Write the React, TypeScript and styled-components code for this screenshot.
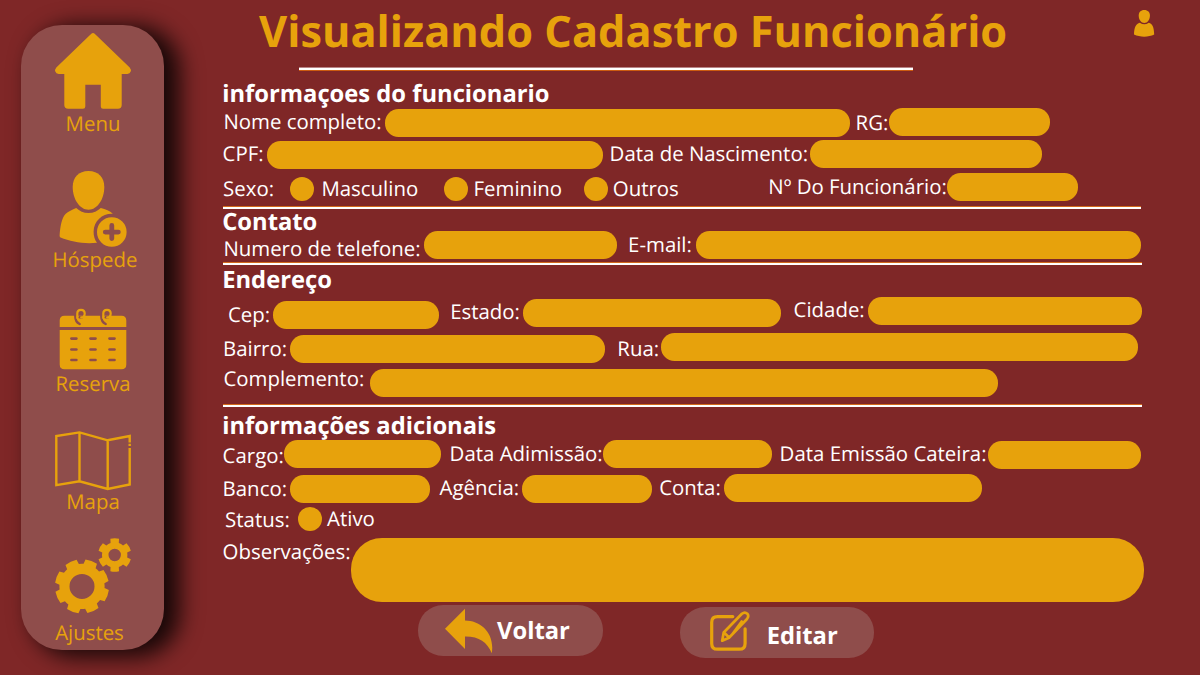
import React from 'react';
import styled, { createGlobalStyle } from 'styled-components';

const GOLD = '#e7a20c';
const PANEL = '#8f4d4b';
const WINE = '#7f2727';

const GlobalStyle = createGlobalStyle`
  * { box-sizing: border-box; }
  body {
    margin: 0;
    background: ${WINE};
    font-family: 'Open Sans', 'Noto Sans', sans-serif;
    text-rendering: geometricPrecision;
    overflow: hidden;
  }
`;

const Page = styled.div`
  display: flex;
  align-items: flex-start;
  width: 1200px;
  height: 675px;
  background: ${WINE};
`;

const Sidebar = styled.nav`
  flex: none;
  display: flex;
  flex-direction: column;
  width: 143px;
  height: 625px;
  margin: 25px 0 0 21px;
  padding-top: 8px;
  border-radius: 41px;
  background: ${PANEL};
  box-shadow: 13px 4px 22px 3px rgba(0, 0, 0, 0.82);
`;

const NavItem = styled.a<{ $h: number; $gap?: number }>`
  flex: none;
  display: flex;
  flex-direction: column;
  align-items: center;
  justify-content: space-between;
  height: ${(p) => p.$h}px;
  margin-top: ${(p) => p.$gap ?? 0}px;
  color: ${GOLD};
  svg {
    display: block;
    flex: none;
    overflow: visible;
  }
`;

const NavText = styled.span<{ $shift?: number }>`
  font-size: 20.4px;
  line-height: 24px;
  margin-left: ${(p) => p.$shift ?? 0}px;
  white-space: nowrap;
`;

const Main = styled.main`
  flex: 1;
  display: flex;
  flex-direction: column;
  padding-left: 57px;
`;

const Header = styled.header`
  display: flex;
  height: 67px;
`;

const Title = styled.h1`
  margin: 1px 0 0 38px;
  width: 875px;
  flex: none;
  font-size: 43.33px;
  line-height: 60px;
  font-weight: 700;
  color: ${GOLD};
  white-space: nowrap;
`;

const UserButton = styled.span`
  display: block;
  height: 27px;
  margin-top: 10px;
  svg {
    display: block;
  }
`;

const TitleRule = styled.div`
  width: 614px;
  height: 4px;
  margin: 0 0 10px 78px;
  background: linear-gradient(#b98486 0 1px, #fff 1px 3px, #cc5c10 3px 4px);
`;

const Rule = styled.hr<{ $w?: number }>`
  flex: none;
  width: ${(p) => p.$w ?? 919}px;
  height: 3px;
  margin: 0 0 0 2px;
  border: 0;
  background: linear-gradient(#d2691b 0 1px, #fff 1px 3px);
`;

const Heading = styled.h2<{ $h: number; $top?: number }>`
  flex: none;
  margin: ${(p) => p.$top ?? 0}px 0 0 1.2px;
  height: ${(p) => p.$h}px;
  font-size: 23.75px;
  line-height: 24px;
  font-weight: 700;
  color: #fff;
  white-space: nowrap;
`;

const Row = styled.div<{ $h: number }>`
  flex: none;
  display: flex;
  align-items: flex-start;
  height: ${(p) => p.$h}px;
`;

const Label = styled.label<{ $w: number; $top?: number; $gap?: number }>`
  flex: none;
  width: ${(p) => p.$w}px;
  margin: ${(p) => p.$top ?? 0}px 0 0 ${(p) => p.$gap ?? 0}px;
  padding-left: 1.6px;
  font-size: 20.42px;
  line-height: 28px;
  color: #fff;
  white-space: nowrap;
`;

const Field = styled.div<{ $w: number; $top?: number; $h?: number }>`
  flex: none;
  width: ${(p) => p.$w}px;
  height: ${(p) => p.$h ?? 28}px;
  margin-top: ${(p) => p.$top ?? 0}px;
  border-radius: ${(p) => (p.$h ? 31 : 13.5)}px;
  background: ${GOLD};
`;

const Radio = styled.span<{ $top: number }>`
  flex: none;
  width: 24px;
  height: 24px;
  margin-top: ${(p) => p.$top}px;
  border-radius: 50%;
  background: ${GOLD};
`;

const Actions = styled.div`
  display: flex;
  align-items: flex-start;
  padding-left: 197px;
`;

const ActionButton = styled.button<{ $w: number; $top: number; $gap?: number; $pad: string }>`
  display: flex;
  align-items: flex-start;
  width: ${(p) => p.$w}px;
  height: 51px;
  margin: ${(p) => p.$top}px 0 0 ${(p) => p.$gap ?? 0}px;
  padding: ${(p) => p.$pad};
  border: 0;
  border-radius: 25px;
  background: ${PANEL};
  color: #fff;
  font: 700 23.75px/24px 'Open Sans', 'Noto Sans', sans-serif;
  text-rendering: geometricPrecision;
  svg {
    display: block;
    flex: none;
  }
`;

const ActionText = styled.span<{ $gap: number; $top: number }>`
  margin: ${(p) => p.$top}px 0 0 ${(p) => p.$gap}px;
`;

function gearPath(
  cx: number, cy: number, outer: number, root: number, hole: number,
  teeth: number, start: number, tipHalf: number, rootHalf: number,
) {
  const pt = (r: number, deg: number) => {
    const a = (deg * Math.PI) / 180;
    return `${(cx + r * Math.cos(a)).toFixed(2)} ${(cy + r * Math.sin(a)).toFixed(2)}`;
  };
  const step = 360 / teeth;
  let d = '';
  for (let i = 0; i < teeth; i++) {
    const a = start + i * step;
    d += `${i ? 'L' : 'M'}${pt(root, a - rootHalf)}L${pt(outer, a - tipHalf)}`;
    d += `A${outer} ${outer} 0 0 1 ${pt(outer, a + tipHalf)}L${pt(root, a + rootHalf)}`;
    d += `A${root} ${root} 0 0 1 ${pt(root, a + step - rootHalf)}`;
  }
  return `${d}ZM${cx - hole} ${cy}a${hole} ${hole} 0 1 0 ${2 * hole} 0a${hole} ${hole} 0 1 0 ${-2 * hole} 0Z`;
}

const HomeIcon = () => (
  <svg width="77" height="76" viewBox="54 33 77 76" fill={GOLD}>
    <path d="M91.3 33.7Q93 32.3 94.7 33.7L129.7 67.5Q131.3 69.5 130.7 71.5Q130 73.9 127.3 73.9H121.7V105Q121.7 108.7 118 108.7H103Q100.8 108.7 100.8 106.5V84.8H85.3V106.5Q85.3 108.7 83 108.7H68.2Q64.3 108.7 64.3 105V73.9H58.7Q56 73.9 55.3 71.5Q54.7 69.5 56.3 67.5Z" />
  </svg>
);

const GuestIcon = () => (
  <svg width="69" height="77" viewBox="58 170 69 77" fill={GOLD}>
    <path d="M88.5 171C98.5 171 104.3 177.5 104.3 187C104.3 199 97.5 209.7 88.5 209.7C79.5 209.7 72.7 199 72.7 187C72.7 177.5 78.5 171 88.5 171Z" />
    <path d="M76.2 208C79.5 211 83.5 213 88.5 213C93.5 213 97.5 211 100.8 208C105.5 209.5 110 210.8 112.8 213.7C103 213 93.8 220.5 93.6 231.5C93.5 236 94.8 240 97 242.7C84 244.2 71 241.7 60.5 237.6Q59.5 237 59.6 235.5C60.2 227.5 61.5 218 65.5 214C68 211.5 72.5 209.5 76.2 208Z" />
    <path fillRule="evenodd" d="M111.8 217.2a14.8 14.8 0 1 1 0 29.6a14.8 14.8 0 1 1 0-29.6ZM109.4 225.5V229.7H105.2a2.35 2.35 0 0 0 0 4.7H109.4V238.6a2.4 2.4 0 0 0 4.8 0V234.4H118.4a2.35 2.35 0 0 0 0-4.7H114.2V225.5a2.4 2.4 0 0 0-4.8 0Z" />
  </svg>
);

const CalendarIcon = () => (
  <svg width="69" height="61" viewBox="58 308 69 61" fill="none">
    <path fill={GOLD} d="M64.5 315.7H121.5Q126.3 315.7 126.3 320.5V327H59.7V320.5Q59.7 315.7 64.5 315.7ZM59.7 329.9H126.3V364.5Q126.3 369.3 121.5 369.3H64.5Q59.7 369.3 59.7 364.5Z" />
    {[0, 26].map((x) => (
      <g key={x} transform={`translate(${x} 0)`} strokeLinecap="round">
        <path stroke={PANEL} strokeWidth="2.4" d="M75.3 315V316.5C75.3 320 76.5 322.5 79.7 324" />
        <path stroke={PANEL} strokeWidth="2.4" d="M79.5 317.3H82" />
        <path stroke={GOLD} strokeWidth="2.2" d="M77.3 318V313.5C77.3 308.7 84.7 308.7 84.7 313.5C84.7 316 83.4 317.6 81.2 317.4" />
      </g>
    ))}
    {[338.6, 349.5, 360].map((y) =>
      [71.4, 90.5, 109.5].map((x) => (
        <path key={`${x}-${y}`} stroke={PANEL} strokeWidth="2.6" strokeLinecap="round" d={`M${x} ${y}h5`} />
      )),
    )}
  </svg>
);

const MapIcon = () => (
  <svg width="77" height="59" viewBox="54 430 77 59" fill="none" stroke={GOLD} strokeWidth="2.4">
    <path d="M129.7 442.5V436L107.7 440.3L79.5 432.4L56.3 436V485.2L79.5 481.3L107.7 488.9L129.7 484.5V448M79.5 432.4V481.3M107.7 440.3V488.9M129.7 443.8v2.2" />
  </svg>
);

const GearsIcon = () => (
  <svg width="77" height="77" viewBox="54 537 77 77" fill={GOLD} fillRule="evenodd">
    <path d={gearPath(82, 586.4, 27.1, 22.6, 12.5, 8, 20.5, 13, 16.5)} />
    <path d={gearPath(114.7, 555, 16.7, 12.7, 6.2, 6, 30, 15, 19)} />
  </svg>
);

const UserIcon = () => (
  <svg width="21" height="27" viewBox="1134 10 21 27" fill={GOLD}>
    <path d="M1144.3 10C1147.9 10 1149.9 12.3 1149.9 15.5C1149.9 19.8 1147.5 23 1144.3 23C1141.1 23 1138.7 19.8 1138.7 15.5C1138.7 12.3 1140.7 10 1144.3 10Z" />
    <path d="M1139.8 22.7Q1144.3 26 1148.8 22.7C1152.5 23.7 1154 27 1154.2 34.6C1148.5 37.3 1140 37.3 1134 34.6C1134.2 27 1136 23.7 1139.8 22.7Z" />
  </svg>
);

const BackIcon = () => (
  <svg width="48" height="46" viewBox="445 608 48 46" fill={GOLD}>
    <path d="M445 628.7L465 608.7V620.4C481 620.5 495 633 491.8 653.2C487 642 479 636.3 465 636.5V649Z" />
  </svg>
);

const EditIcon = () => (
  <svg width="40" height="41" viewBox="710 611 40 41" fill="none" stroke={GOLD} strokeWidth="3.2" strokeLinecap="round" strokeLinejoin="round">
    <path d="M732.8 616.6H717.5Q711.7 616.6 711.7 622.4V643.4Q711.7 649.2 717.5 649.2H739.3Q745.1 649.2 745.1 643.4V628.8" />
    <path strokeWidth="2.7" d="M723.7 632.5L741.9 613.8Q744.8 611.4 747.3 613.7Q749.3 616.2 747 619L729 637.8L722.2 640.7ZM724.3 632.8L729 637.5M732.5 634L741.7 621.5" />
  </svg>
);

export default function App() {
  return (
    <>
      <GlobalStyle />
      <Page>
        <Sidebar>
          <NavItem $h={102}>
            <HomeIcon />
            <NavText $shift={1}>Menu</NavText>
          </NavItem>
          <NavItem $h={101} $gap={35}>
            <GuestIcon />
            <NavText $shift={5}>Hóspede</NavText>
          </NavItem>
          <NavItem $h={87} $gap={37}>
            <CalendarIcon />
            <NavText $shift={1}>Reserva</NavText>
          </NavItem>
          <NavItem $h={83} $gap={35}>
            <MapIcon />
            <NavText $shift={1}>Mapa</NavText>
          </NavItem>
          <NavItem $h={107} $gap={24}>
            <GearsIcon />
            <NavText $shift={-6}>Ajustes</NavText>
          </NavItem>
        </Sidebar>

        <Main>
          <Header>
            <Title>Visualizando Cadastro Funcionário</Title>
            <UserButton>
              <UserIcon />
            </UserButton>
          </Header>
          <TitleRule />

          <Heading $h={26}>informaçoes do funcionario</Heading>
          <Row $h={32}>
            <Label $w={163.2} $gap={0.8}>Nome completo:</Label>
            <Field $w={465} $top={2} />
            <Label $w={35} $gap={4} $top={1}>RG:</Label>
            <Field $w={161} $top={1} />
          </Row>
          <Row $h={32}>
            <Label $w={46}>CPF:</Label>
            <Field $w={336} $top={2} />
            <Label $w={202} $gap={5}>Data de Nascimento:</Label>
            <Field $w={232} $top={1} />
          </Row>
          <Row $h={35}>
            <Label $w={68.5} $gap={0.5} $top={3}>Sexo:</Label>
            <Radio $top={6} />
            <Label $w={124.2} $gap={5.8} $top={3}>Masculino</Label>
            <Radio $top={6} />
            <Label $w={112} $gap={4} $top={3}>Feminino</Label>
            <Radio $top={6} />
            <Label $w={154.8} $gap={3.2} $top={3}>Outros</Label>
            <Label $w={180.2} $gap={0.8} $top={1}>Nº Do Funcionário:</Label>
            <Field $w={131} $top={2} />
          </Row>
          <Rule $w={918} />

          <Heading $h={21}>Contato</Heading>
          <Row $h={32}>
            <Label $w={202.2} $gap={0.8} $top={4}>Numero de telefone:</Label>
            <Field $w={193} $top={1} />
            <Label $w={69.5} $gap={9.5}>E-mail:</Label>
            <Field $w={445} $top={1} />
          </Row>
          <Rule />

          <Heading $h={28} $top={2}>Endereço</Heading>
          <Row $h={38}>
            <Label $w={46.6} $gap={5.4} $top={5}>Cep:</Label>
            <Field $w={166} $top={6} />
            <Label $w={74.4} $gap={9.6} $top={2}>Estado:</Label>
            <Field $w={258} $top={4} />
            <Label $w={76} $gap={11}>Cidade:</Label>
            <Field $w={274} $top={2} />
          </Row>
          <Row $h={31}>
            <Label $w={68.5} $gap={0.5} $top={1}>Bairro:</Label>
            <Field $w={315} $top={2} />
            <Label $w={45.3} $gap={10.7} $top={1}>Rua:</Label>
            <Field $w={477} />
          </Row>
          <Row $h={40}>
            <Label $w={148.2} $gap={0.8}>Complemento:</Label>
            <Field $w={628} $top={5} />
          </Row>
          <Rule />

          <Heading $h={26} $top={6}>informações adicionais</Heading>
          <Row $h={34}>
            <Label $w={63} $top={2}>Cargo:</Label>
            <Field $w={157} $top={1} />
            <Label $w={155} $gap={7}>Data Adimissão:</Label>
            <Field $w={169} $top={1} />
            <Label $w={210} $gap={6}>Data Emissão Cateira:</Label>
            <Field $w={153} $top={2} />
          </Row>
          <Row $h={31}>
            <Label $w={69} $top={1}>Banco:</Label>
            <Field $w={140} $top={2} />
            <Label $w={84} $gap={8}>Agência:</Label>
            <Field $w={130} $top={2} />
            <Label $w={66.4} $gap={5.6}>Conta:</Label>
            <Field $w={258} $top={1} />
          </Row>
          <Row $h={33}>
            <Label $w={74.5} $gap={2.5} $top={1}>Status:</Label>
            <Radio $top={3} />
            <Label $w={60} $gap={3.5}>Ativo</Label>
          </Row>
          <Row $h={67}>
            <Label $w={130}>Observações:</Label>
            <Field $w={793} $top={1} $h={64} />
          </Row>

          <Actions>
            <ActionButton $w={185} $top={1} $pad="3px 0 0 27px">
              <BackIcon />
              <ActionText $gap={4} $top={10}>Voltar</ActionText>
            </ActionButton>
            <ActionButton $w={194} $top={3} $gap={77} $pad="4px 0 0 30px">
              <EditIcon />
              <ActionText $gap={16.7} $top={12}>Editar</ActionText>
            </ActionButton>
          </Actions>
        </Main>
      </Page>
    </>
  );
}
